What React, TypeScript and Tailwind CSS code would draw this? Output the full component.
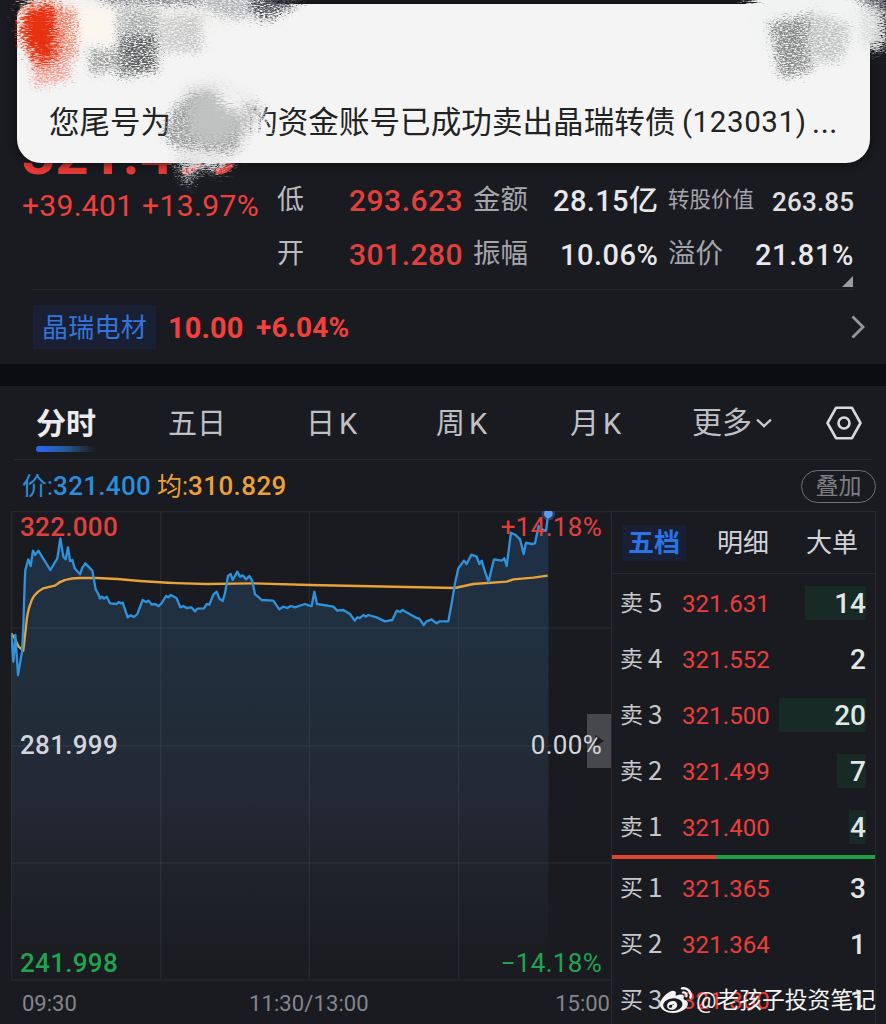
import React from 'react';
import { FaWeibo } from 'react-icons/fa';

const tabs = [
  { title: '五日', suffix: '', className: 'w-[138px]' },
  { title: '日', suffix: 'K', className: 'w-[130px]' },
  { title: '周', suffix: 'K', className: 'w-[134px]' },
  { title: '月', suffix: 'K', className: 'w-[122px]' },
];

const asks = [
  { label: '卖', level: 5, price: '321.631', qty: 14, bar: 61 },
  { label: '卖', level: 4, price: '321.552', qty: 2, bar: 0 },
  { label: '卖', level: 3, price: '321.500', qty: 20, bar: 87 },
  { label: '卖', level: 2, price: '321.499', qty: 7, bar: 29 },
  { label: '卖', level: 1, price: '321.400', qty: 4, bar: 17 },
];

const bids = [
  { label: '买', level: 1, price: '321.365', qty: 3, bar: 0 },
  { label: '买', level: 2, price: '321.364', qty: 1, bar: 0 },
  { label: '买', level: 3, price: '321.300', qty: 1, bar: 0 },
];

// chart units are a third of a pixel
const priceLine =
  '34,400 40,485 46,405 54,525 66,455 70,380 74,250 76,210 85,178 92,198 99,152 105,165 115,152 151,210 172,175 181,115 190,170 197,178 204,142 210,183 217,180 224,205 240,223 247,203 256,190 277,212 287,268 294,280 300,296 306,290 312,296 320,290 330,310 350,312 356,306 362,310 368,308 383,352 392,346 402,351 412,342 428,300 438,306 446,302 455,314 465,312 476,319 486,308 498,288 506,292 512,285 530,295 541,322 550,318 560,324 574,322 585,334 592,326 612,325 620,312 628,314 640,284 650,275 658,296 668,303 675,280 684,228 692,222 698,240 712,215 720,230 728,226 738,238 748,228 757,243 765,283 772,288 785,300 820,302 838,328 850,320 862,324 872,318 885,322 915,312 928,317 ' +
  '935,318 943,275 951,312 1000,320 1012,332 1030,330 1050,342 1064,362 1072,352 1080,354 1090,345 1098,350 1105,345 1130,352 1155,364 1177,360 1190,332 1200,336 1208,330 1214,334 1250,354 1258,356 1271,375 1280,364 1295,358 1304,366 1310,370 1320,364 1345,364 1355,310 1365,250 1375,205 1392,182 1400,192 1414,164 1430,170 1438,192 1445,182 1456,218 1466,246 1474,210 1482,178 1505,182 1513,175 1520,198 1533,98 1548,106 1560,118 1571,162 1578,128 1595,132 1605,130 1616,78 1624,88 1638,92 1645,40';

const averageLine =
  'M34 400 L44 415 L56 440 L70 452 L78 380 Q82 335 90 315 Q98 282 130 265 Q148 260 165 257 Q180 244 195 240 Q215 234 240 234 L290 234 Q350 236 420 243 Q520 251 620 252 L760 250 L930 255 L1365 264 Q1400 256 1420 252 L1520 245 L1540 238 L1600 233 L1643 227';

function Chart() {
  return (
    <svg viewBox="33 33 1800 1410" className="block h-[470px] w-[600px]" fill="none">
      <defs>
        <linearGradient id="area" x1="0" y1="0" x2="0" y2="1">
          <stop offset="0" stopColor="#1f3450" stopOpacity="0.85" />
          <stop offset="0.28" stopColor="#223343" stopOpacity="0.85" />
          <stop offset="0.62" stopColor="#242b38" stopOpacity="0.85" />
          <stop offset="1" stopColor="#1b1c21" stopOpacity="0.6" />
        </linearGradient>
      </defs>
      <polygon points={`34,1438 ${priceLine} 1645,1438`} fill="url(#area)" />
      <g stroke="#8b95a5" strokeOpacity="0.11" strokeWidth="4">
        <path d="M34 35H1833M34 384H1833M34 738H1833M34 1089H1833" />
        <path d="M35 35V1436M482 35V1436M928 35V1436M1376 35V1436" />
        <path d="M34 1440H1833" />
      </g>
      <path d={averageLine} stroke="#e9a13a" strokeWidth="7" strokeLinejoin="round" />
      <polyline points={priceLine} stroke="#2e92dc" strokeWidth="7" strokeLinejoin="round" />
      <circle cx="1645" cy="41" r="20" fill="#3f6fc4" fillOpacity="0.45" />
      <circle cx="1645" cy="41" r="13" fill="#5f9cf3" />
    </svg>
  );
}

function OrderRow({ row }: { row: (typeof asks)[number] }) {
  return (
    <div className="flex h-14 shrink-0 items-center pl-[8px] pr-[9px] leading-none">
      <span className="w-[28px] pb-[4px] font-['Noto_Sans_CJK_SC'] text-[23px] text-[#c6c7cb]">{row.label}</span>
      <span className="w-[34px] pb-[4px] font-['Noto_Sans_CJK_SC'] text-[26px] text-[#c6c7cb]">{row.level}</span>
      <span className="flex-1 pt-[2px] text-[24px] tracking-[0.1px] text-[#ea3e3a]">{row.price}</span>
      <span
        className="flex h-[34px] items-center justify-end bg-[#182a26] pt-[2px] text-[28px] font-medium text-[#e1e7e5]"
        style={{ width: row.bar }}
      >
        {row.qty}
      </span>
    </div>
  );
}

// scribbled-out parts of the notification
function Scribbles() {
  return (
    <svg viewBox="0 0 886 200" className="absolute left-0 top-0 h-[200px] w-[886px]">
      <defs>
        <filter id="soft" x="-30%" y="-30%" width="160%" height="160%" colorInterpolationFilters="sRGB">
          <feGaussianBlur in="SourceGraphic" stdDeviation="4" result="b" />
          <feTurbulence type="fractalNoise" baseFrequency="0.2 0.85" numOctaves="3" seed="4" result="n" />
          <feDisplacementMap in="b" in2="n" scale="32" xChannelSelector="R" yChannelSelector="G" />
        </filter>
        <filter id="grain" x="-30%" y="-30%" width="160%" height="160%" colorInterpolationFilters="sRGB">
          <feGaussianBlur in="SourceGraphic" stdDeviation="3" result="b" />
          <feTurbulence type="fractalNoise" baseFrequency="0.35 0.9" numOctaves="3" seed="9" result="n" />
          <feDisplacementMap in="b" in2="n" scale="24" xChannelSelector="R" yChannelSelector="G" result="d" />
          <feColorMatrix in="n" type="matrix" values="0 0 0 0 0  0 0 0 0 0  0 0 0 0 0  0 0 3.2 0 -0.9" result="m" />
          <feComposite in="d" in2="m" operator="in" />
        </filter>
        <filter id="smooth" x="-40%" y="-40%" width="180%" height="180%" colorInterpolationFilters="sRGB">
          <feGaussianBlur in="SourceGraphic" stdDeviation="8" result="b" />
          <feTurbulence type="fractalNoise" baseFrequency="0.3 0.7" numOctaves="3" seed="2" result="n" />
          <feDisplacementMap in="b" in2="n" scale="16" xChannelSelector="R" yChannelSelector="G" />
        </filter>
      </defs>
      <g filter="url(#soft)">
        <path d="M34 -20 H278 L264 14 L220 26 H40 L22 16Z" fill="#f1f1ef" />
        <path d="M746 -20 H856 L882 8 V46 L862 50 H760Z" fill="#f1f2f2" />
        <path d="M60 6 H114 V44 H66Z" fill="#fbf6ee" />
      </g>
      <g filter="url(#grain)">
        <path d="M88 -8 H210 V5 H112Z" fill="#7f8187" />
        <path d="M118 10 H158 V36 H118Z" fill="#a8aaab" />
        <path d="M195 -8 H262 L248 18 H228 L206 10Z" fill="#b0b1b6" />
        <path d="M252 -10 H312 L290 9 L266 20 L252 14Z" fill="#4a4c54" />
        <path d="M160 18 L202 14 V52 H162Z" fill="#c6c7c6" />
        <path d="M119 36 H157 V70 L119 77Z" fill="#5a5c5d" />
        <path d="M88 50 H122 V66 L92 75Z" fill="#999b99" />
        <path d="M28 50 H70 V78 L36 88Z" fill="#f2a095" />
        <path d="M46 8 H76 V58 H46Z" fill="#f08a78" />
        <path d="M770 23 L812 15 V70 L780 78Z" fill="#858787" />
        <path d="M808 10 L850 26 L842 62 H806Z" fill="#c0c2c2" />
        <path d="M846 -12 H894 V14 L866 6Z" fill="#6d6f76" />
        <path d="M860 8 H886 V48 H864Z" fill="#d8dada" />
      </g>
      <g filter="url(#soft)">
        <path d="M24 8 L54 2 L56 34 L54 62 L38 64 L20 36Z" fill="#e6300f" />
      </g>
      <g filter="url(#grain)">
        <path d="M164 136 L172 110 L194 94 L240 100 L262 106 L246 126 L236 152 L206 156 L180 150Z" fill="#8f9091" />
      </g>
      <g filter="url(#smooth)">
        <path d="M190 92 L214 88 L248 106 L236 140 L206 148 L184 134Z" fill="#c0c1c1" />
      </g>
      <g filter="url(#soft)">
        <path d="M216 80 L254 96 L242 114 L222 106Z" fill="#f1f1f1" />
        <path d="M246 116 L264 102 L264 142 L242 150Z" fill="#f3f3f3" />
        <path d="M172 150 L234 154 L228 164 L192 168Z" fill="#eeeeee" />
      </g>
      <g filter="url(#grain)">
        <path d="M174 158 H202 L188 188Z" fill="#cdced0" />
        <path d="M208 158 H232 L212 174Z" fill="#dfe0e1" />
        <path d="M242 118 L262 106 L240 146Z" fill="#bcbdbe" />
      </g>
    </svg>
  );
}

export default function App() {
  return (
    <div className="relative flex h-[1024px] w-[886px] flex-col overflow-hidden bg-[#1a1b20] font-[Roboto,'Noto_Sans_CJK_SC',sans-serif] leading-none whitespace-nowrap">
      {/* quote header */}
      <header className="flex h-[364px] shrink-0 flex-col">
        <div className="flex h-[289px] shrink-0 pl-[22px] pt-[126px]">
          <div className="w-[255px] shrink-0">
            <div className="h-[64px] text-[58px] leading-[56px] font-bold tracking-[0.3px] text-[#ec3a37]">321.499</div>
            <div className="flex items-center text-[30px] leading-[31px] tracking-[0.3px] text-[#f0403c]">
              <span className="w-[120px]">+39.401</span>
              <span className="tracking-[0.4px]">+13.97%</span>
            </div>
          </div>
          <div className="flex flex-col pt-[47px]">
            <div className="flex h-[54px] items-center">
              <span className="w-[72px] text-[27px] text-[#babbc0]">低</span>
              <span className="w-[124px] pt-[2px] text-[30px] font-medium tracking-[0.5px] text-[#e2403d]">293.623</span>
              <span className="w-[80px] text-[27.5px] text-[#a5a6ab]">金额</span>
              <span className="w-[115px] pt-[2px] text-[29px] font-medium tracking-[0.4px] text-[#e8e8ec]">28.15亿</span>
              <span className="w-[104px] text-[21.5px] text-[#a5a6ab]">转股价值</span>
              <span className="pt-[3px] text-[26px] font-medium tracking-[0.2px] text-[#e0e0e4]">263.85</span>
            </div>
            <div className="flex h-[54px] items-center">
              <span className="w-[72px] text-[27px] text-[#babbc0]">开</span>
              <span className="w-[124px] pt-[2px] text-[30px] font-medium tracking-[0.5px] text-[#e2403d]">301.280</span>
              <span className="w-[87px] text-[27.5px] text-[#a5a6ab]">振幅</span>
              <span className="w-[108px] pt-[2px] text-[29px] font-medium tracking-[0.5px] text-[#e8e8ec]">10.06%</span>
              <span className="w-[87px] text-[27.5px] text-[#a5a6ab]">溢价</span>
              <span className="pt-[2px] text-[29px] font-medium tracking-[0.6px] text-[#e8e8ec]">21.81%</span>
            </div>
            <svg viewBox="0 0 11 11" className="ml-[565px] -mt-[5px] block size-[11px] shrink-0">
              <path d="M11 0V11H0Z" fill="#9b9ca1" />
            </svg>
          </div>
        </div>
        <div className="mx-[32px] h-px shrink-0 bg-[#26272c]" />
        <div className="flex flex-1 items-center pl-[33px] pr-[21px]">
          <span className="flex h-[44px] w-[123px] items-center justify-center bg-[#1a2033] pt-[2px] text-[26px] tracking-[0.3px] text-[#3474dd]">晶瑞电材</span>
          <span className="ml-3 w-[88px] pt-[2px] text-[29px] font-bold tracking-[0.1px] text-[#f2403c]">10.00</span>
          <span className="flex-1 pt-[2px] text-[28px] font-bold tracking-[0.2px] text-[#f2403c]">+6.04%</span>
          <svg viewBox="0 0 14 24" className="block h-[24px] w-[14px]" fill="none">
            <path d="M1.5 1.5L12 12L1.5 22.5" stroke="#96979c" strokeWidth="2.8" />
          </svg>
        </div>
      </header>

      <div className="h-[22px] shrink-0 bg-[#0c0d12]" />

      {/* period tabs */}
      <nav className="flex h-[73px] shrink-0 items-center pl-[36px] text-[29px] text-[#bfc0c5]">
        <div className="flex h-full w-[132px] flex-col pt-[23px]">
          <span className="text-[30px] leading-[30px] font-bold text-[#ececf0]">分时</span>
          <span className="mt-[7px] h-[6px] w-[59px] rounded-l-full bg-linear-to-r from-[#2f62fa] via-[#245c96] to-[#1a1b20]" />
        </div>
        {tabs.map((tab) => (
          <span key={tab.title} className={`flex gap-[4px] pt-[3px] ${tab.className}`}>
            {tab.title}
            {tab.suffix && <span>{tab.suffix}</span>}
          </span>
        ))}
        <span className="text-[30px]">更多</span>
        <svg viewBox="0 0 16 10" className="ml-[4px] mr-[54px] block h-[10px] w-[16px]" fill="none">
          <path d="M1 1.5L8 8.2L15 1.5" stroke="#c9cacf" strokeWidth="2.4" />
        </svg>
        <svg viewBox="0 0 36 34" className="block h-[34px] w-[36px]" fill="none" stroke="#d8d9dd" strokeWidth="2.6">
          <path d="M10 1.8H26L34.5 17L26 32.2H10L1.5 17Z" strokeLinejoin="round" />
          <circle cx="18" cy="17" r="5.5" />
        </svg>
      </nav>
      <div className="mx-[14px] h-px shrink-0 bg-[#29292c]" />

      <div className="flex h-[51px] shrink-0 items-center pl-[22px] pr-[10px] pt-px">
        <span className="w-[135px] text-[26px] text-[#2b8ddb]">
          <span className="text-[25px]">价:</span>
          <span className="font-medium tracking-[0.3px]">321.400</span>
        </span>
        <span className="flex-1 text-[26px] text-[#eba03a]">
          <span className="text-[25px]">均:</span>
          <span className="font-medium tracking-[0.4px]">310.829</span>
        </span>
        <span className="flex h-[33px] w-[75px] items-center justify-center rounded-full border border-[#6f7075] text-[23px] text-[#7d7e83]">叠加</span>
      </div>

      <main className="flex h-[513px] shrink-0 pl-[11px]">
        <section className="flex w-[600px] shrink-0 flex-col">
          <div className="relative h-[470px] shrink-0">
            <div className="absolute right-0 top-[203px] flex h-[54px] w-[24px] items-center bg-[#47484d] pl-[8px]">
              <svg viewBox="0 0 9 12" className="block h-[12px] w-[9px]">
                <path d="M0 0L9 6L0 12Z" fill="#1c1d22" />
              </svg>
            </div>
            <div className="absolute inset-0 flex flex-col justify-between pb-[5px] pl-[9px] pr-[9px] pt-[3px] text-[26px] leading-[26px] tracking-[0.3px]">
              <div className="flex justify-between text-[#e2403f]">
                <span className="font-medium">322.000</span>
                <span>+14.18%</span>
              </div>
              <div className="flex justify-between text-[#d3d5dc]">
                <span className="font-medium">281.999</span>
                <span>0.00%</span>
              </div>
              <div className="flex justify-between text-[#21a350]">
                <span className="font-medium">241.998</span>
                <span>−14.18%</span>
              </div>
            </div>
            <Chart />
          </div>
          <div className="flex flex-1 pl-[11px] pr-[1px] pt-[12px] text-[22px] leading-[22px] text-[#85868c]">
            <span className="w-[227px]">09:30</span>
            <span className="flex-1 tracking-[0.1px]">11:30/13:00</span>
            <span>15:00</span>
          </div>
        </section>

        {/* order book */}
        <aside className="flex w-[265px] shrink-0 flex-col border-x border-t border-[#28292e]">
          <div className="flex h-[61px] shrink-0 items-center pl-[10px] text-[26px] text-[#d2d2d9]">
            <span className="flex h-[36px] w-[64px] items-center justify-center bg-[#191f34] pt-px font-bold text-[#2a74e4]">五档</span>
            <span className="ml-[31px] pt-px">明细</span>
            <span className="ml-[37px] pt-px">大单</span>
          </div>
          <div className="mb-px h-px shrink-0 bg-[#28292e]" />
          {asks.map((row) => (
            <OrderRow key={row.level} row={row} />
          ))}
          <div className="mb-px flex h-[4px] shrink-0">
            <div className="w-[104px] bg-[#e0432f]" />
            <div className="flex-1 bg-[#1f9e43]" />
          </div>
          {bids.map((row) => (
            <OrderRow key={row.level} row={row} />
          ))}
        </aside>
      </main>

      {/* notification banner */}
      <div className="absolute left-[17px] top-[4px] h-[159px] w-[853px] rounded-[24px] rounded-t-[14px] bg-[#f4f4f4] px-[32px] pt-[103px] text-[30.5px] leading-[31px] text-[#222222] shadow-[0_0_10px_#0c0c10]">
        <div className="flex">
          <span className="w-[201px]">您尾号为</span>
          <span className="w-[435px] tracking-[0.1px]">的资金账号已成功卖出晶瑞转债</span>
          <span className="w-[134px] text-[29.5px] tracking-[0.6px] pl-[6px] mr-[4px]">(123031)</span>
          <span className="tracking-[0.6px]">...</span>
        </div>
      </div>
      <Scribbles />

      <div className="absolute bottom-[7px] right-[10px] flex items-center gap-[4px] text-[22.8px] leading-[28px] text-[#f4f4f5]">
        <FaWeibo className="size-[32px]" />
        <span>@老孩子投资笔记</span>
      </div>
    </div>
  );
}
